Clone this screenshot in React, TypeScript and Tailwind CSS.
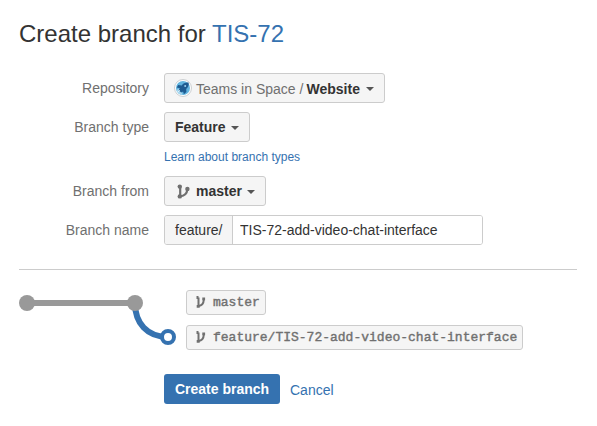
import type { ReactNode } from 'react';

function BranchIcon({ className }: { className: string }) {
  return (
    <svg viewBox="0 0 13 15" className={className} fill="none" stroke="currentColor">
      <path d="M3.200 2.500v10M3.200 12.300C7.500 11.800 10 9.500 10.300 5.500" strokeWidth="2.200" />
      <circle cx="2.800" cy="2.600" r="2.200" fill="currentColor" stroke="none" />
      <circle cx="2.800" cy="12.400" r="2.200" fill="currentColor" stroke="none" />
      <circle cx="10.400" cy="5" r="2.200" fill="currentColor" stroke="none" />
    </svg>
  );
}

function SmallBranchIcon() {
  return (
    <svg viewBox="0 0 10 12" className="-mt-[2px] mr-[7px] h-[12px] w-[10px] shrink-0" fill="none" stroke="currentColor">
      <path d="M2.500 1.500v8.700M2.500 10C5.800 9.800 7.600 7.500 7.800 3.500" strokeWidth="2" />
      <path d="M.5 1.500h2M.7 10.300h3M6.300 2.900h2.800" strokeWidth="2.800" />
    </svg>
  );
}

function RocketAvatar() {
  return (
    <svg viewBox="0 0 18 18" className="-ml-px mr-[4px] size-[18px] shrink-0">
      <circle cx="9" cy="9" r="8.5" fill="#fff" stroke="#c6c9cc" strokeWidth="0.9" />
      <circle cx="9" cy="9" r="7" fill="#62b4df" />
      <path d="M2.500 11.500c2-3 5-2.500 6 4.300-3 .3-5-1.400-6-4.300z" fill="#a4d6ef" />
      <path d="M14.600 3.600c-3.500-.2-5.300.7-6.800 2.800L4.200 6 2.700 8.500l3.200.8-1.300 2 2.600 2.300 1.900-1.200.8 2.800 2.500-2.100-.2-3.200c2.200-1.700 2.800-3.500 2.400-6.300z" fill="#1e5b91" />
      <circle cx="11.200" cy="6.900" r="1" fill="#9bd0ef" />
      <path d="M3.500 13.300l2.300-2" stroke="#e5f4fb" strokeWidth="1" />
    </svg>
  );
}

function Caret({ className = '' }: { className?: string }) {
  return (
    <svg viewBox="0 0 8 4" className={`mt-px h-[4px] w-[8px] shrink-0 ${className}`}>
      <path d="M0 0h8L4 4z" fill="#555" />
    </svg>
  );
}

function Field({ label, children }: { label: string; children: ReactNode }) {
  return (
    <div className="flex h-[30px] items-center">
      <label className="w-[130px] text-right text-[14px] leading-[20px] text-[#707070]">{label}</label>
      <div className="ml-[15px] flex">{children}</div>
    </div>
  );
}

function Dropdown({ className, children }: { className: string; children: ReactNode }) {
  return (
    <button className={`flex h-[30px] items-center whitespace-pre rounded-[3px] border border-[#ccc] bg-[#f5f5f5] px-[10px] text-[14px] leading-[20px] text-[#333] ${className}`}>
      {children}
    </button>
  );
}

function BranchTag({ className, children }: { className: string; children: ReactNode }) {
  return (
    <div className={`flex h-[25px] items-center rounded-[3px] border border-[#ccc] bg-[#f5f5f5] pl-[9px] font-['Liberation_Mono',monospace] text-[13px] leading-[20px] text-[#707070] ${className}`}>
      <SmallBranchIcon />
      <span className="whitespace-nowrap pt-px [-webkit-text-stroke:0.4px_#707070]">{children}</span>
    </div>
  );
}

export default function App() {
  return (
    <main className="h-[426px] w-[597px] overflow-hidden bg-white px-[19px] pt-[18px] font-['Liberation_Sans',Arial,sans-serif] text-[#333]">
      <h1 className="h-[55px] whitespace-nowrap text-[24px] leading-[31px]">
        Create branch for <a className="text-[#3572b0]">TIS-72</a>
      </h1>
      <div className="flex flex-col gap-[9px]">
        <Field label="Repository">
          <Dropdown className="w-[221px]">
            <RocketAvatar />
            <span className="pt-px text-[#707070]">Teams in Space</span>
            <span className="ml-[4px] mr-[3px] pt-px text-[#707070]">/</span>
            <b className="pt-px">Website</b>
            <Caret className="ml-[6px]" />
          </Dropdown>
        </Field>
        <Field label="Branch type">
          <Dropdown className="w-[86px]">
            <b>Feature</b>
            <Caret className="ml-[5px]" />
          </Dropdown>
        </Field>
      </div>
      <a className="ml-[145px] mt-[5px] block h-[29px] text-[12px] leading-[20px] text-[#3572b0]">Learn about branch types</a>
      <div className="flex flex-col gap-[9px]">
        <Field label="Branch from">
          <Dropdown className="w-[102px]">
            <BranchIcon className="ml-[2px] mr-[6px] h-[15px] w-[13px] shrink-0 text-[#707070]" />
            <b>master</b>
            <Caret className="ml-[5px]" />
          </Dropdown>
        </Field>
        <Field label="Branch name">
          <div className="flex h-[30px] w-[319px] items-stretch overflow-hidden rounded-[3px] border border-[#ccc] text-[14px] leading-[28px]">
            <span className="w-[68px] border-r border-[#ccc] bg-[#f5f5f5] pl-[10px]">feature/</span>
            <input defaultValue="TIS-72-add-video-chat-interface" className="min-w-0 flex-1 bg-white pl-[7px] outline-none" />
          </div>
        </Field>
      </div>
      <hr className="mt-[24px] w-[558px] border-[#ccc]" />
      <div className="mt-[20px] flex h-[60px]">
        <svg viewBox="0 0 167 60" className="h-[60px] w-[167px] shrink-0" fill="none">
          <path d="M116 13c0 20 12 34 33 34" stroke="#3572b0" strokeWidth="6" />
          <path d="M8 13h108" stroke="#999" strokeWidth="6" />
          <circle cx="8" cy="13" r="8" fill="#999" />
          <circle cx="116" cy="13" r="8" fill="#999" />
          <circle cx="149" cy="47" r="6" fill="#fff" stroke="#3572b0" strokeWidth="4" />
        </svg>
        <div className="flex flex-col gap-[10px]">
          <BranchTag className="w-[80px]">master</BranchTag>
          <BranchTag className="w-[337px]">feature/TIS-72-add-video-chat-interface</BranchTag>
        </div>
      </div>
      <div className="ml-[145px] mt-[24px] flex h-[30px] items-center text-[14px] leading-[20px]">
        <button className="h-[30px] w-[116px] whitespace-nowrap rounded-[3px] bg-[#3572b0] font-bold text-white">Create branch</button>
        <a className="ml-[10px] pt-[2px] text-[#3572b0]">Cancel</a>
      </div>
    </main>
  );
}
